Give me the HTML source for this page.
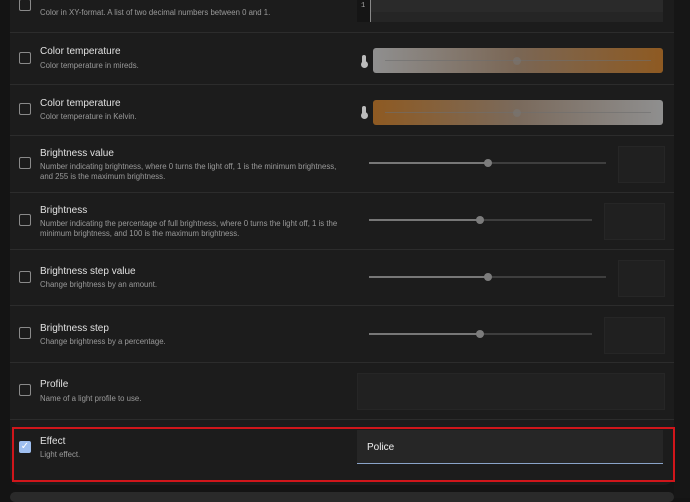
<!DOCTYPE html><html><head><style>
body{margin:0;width:690px;height:498px;background:#141414;overflow:hidden;font-family:"Liberation Sans",sans-serif;position:relative}
.card{position:absolute;left:10px;top:-10px;width:664px;height:495px;background:#1c1c1c;border-radius:0 0 10px 10px}
.right{position:absolute;left:674px;top:0;width:16px;height:498px;background:#161616}
.line{position:absolute;left:10px;width:664px;height:1px;background:#2c2c2c}
.cb{position:absolute;left:19px;width:10px;height:10px;border:1.5px solid #8a8a8a;border-radius:2px}
.t{position:absolute;left:40px;font-size:10px;color:#e1e1e1}
.d{position:absolute;left:40px;font-size:7.8px;color:#9a9a9a;line-height:10px;width:310px}
.sl{position:absolute;height:2px;background:#3e3e3e}
.slf{position:absolute;height:2px;background:#777}
.th{position:absolute;width:8px;height:8px;border-radius:50%;background:#7c7c7c}
.box{position:absolute;background:#202020;border:1px solid #262626}
.ct{position:absolute;left:373px;width:290px;height:25px;border-radius:3px}
.ct .ln{position:absolute;left:12px;top:12px;width:266px;height:1px;background:rgba(110,110,110,.6)}
.ct .tb{position:absolute;left:140px;top:9px;width:8px;height:8px;border-radius:50%;background:rgba(120,120,120,.5)}
.therm{position:absolute;left:362px;width:4px;height:10px;background:#bbb;border-radius:2px}
.therm:after{content:"";position:absolute;left:-1.5px;top:6px;width:7px;height:7px;border-radius:50%;background:#bbb}
</style></head><body>
<div class="card"></div><div class="right"></div>
<div style="position:absolute;left:357px;top:0;width:13px;height:22px;background:#151515"></div>
<div style="position:absolute;left:361px;top:2px;font-size:7px;color:#aaa;font-family:'Liberation Mono',monospace">1</div>
<div style="position:absolute;left:370px;top:0;width:1px;height:22px;background:#888"></div>
<div style="position:absolute;left:371px;top:0;width:292px;height:12px;background:#2a2a2a"></div>
<div style="position:absolute;left:371px;top:12px;width:292px;height:10px;background:#252525"></div>
<div class="cb" style="top:-1px"></div>
<div class="t" style="top:-8px">XY-Color</div>
<div class="d" style="top:8px">Color in XY-format. A list of two decimal numbers between 0 and 1.</div>
<div class="line" style="top:32px"></div>
<div class="cb" style="top:52px"></div>
<div class="t" style="top:46px">Color temperature</div>
<div class="d" style="top:61px">Color temperature in mireds.</div>
<div class="therm" style="top:55px"></div>
<div class="ct" style="top:48px;background:linear-gradient(90deg,#8f8f8f,#7a6654 50%,#8e5a22)"><div class="ln"></div><div class="tb"></div></div>
<div class="line" style="top:84px"></div>
<div class="cb" style="top:103px"></div>
<div class="t" style="top:98px">Color temperature</div>
<div class="d" style="top:112px">Color temperature in Kelvin.</div>
<div class="therm" style="top:106px"></div>
<div class="ct" style="top:100px;background:linear-gradient(90deg,#8e5a22,#7a6a5c 50%,#8f8f8f)"><div class="ln"></div><div class="tb"></div></div>
<div class="line" style="top:135px"></div>
<div class="cb" style="top:157px"></div>
<div class="t" style="top:148px">Brightness value</div>
<div class="d" style="top:162px">Number indicating brightness, where 0 turns the light off, 1 is the minimum brightness, and 255 is the maximum brightness.</div>
<div class="sl" style="left:369px;top:162px;width:237px"></div><div class="slf" style="left:369px;top:162px;width:119px"></div><div class="th" style="left:484px;top:159px"></div>
<div class="box" style="left:618px;top:146px;width:45px;height:35px"></div>
<div class="line" style="top:192px"></div>
<div class="cb" style="top:214px"></div>
<div class="t" style="top:205px">Brightness</div>
<div class="d" style="top:219px">Number indicating the percentage of full brightness, where 0 turns the light off, 1 is the minimum brightness, and 100 is the maximum brightness.</div>
<div class="sl" style="left:369px;top:219px;width:223px"></div><div class="slf" style="left:369px;top:219px;width:111px"></div><div class="th" style="left:476px;top:216px"></div>
<div class="box" style="left:604px;top:203px;width:59px;height:35px"></div>
<div class="line" style="top:249px"></div>
<div class="cb" style="top:271px"></div>
<div class="t" style="top:266px">Brightness step value</div>
<div class="d" style="top:280px">Change brightness by an amount.</div>
<div class="sl" style="left:369px;top:276px;width:237px"></div><div class="slf" style="left:369px;top:276px;width:119px"></div><div class="th" style="left:484px;top:273px"></div>
<div class="box" style="left:618px;top:260px;width:45px;height:35px"></div>
<div class="line" style="top:305px"></div>
<div class="cb" style="top:327px"></div>
<div class="t" style="top:323px">Brightness step</div>
<div class="d" style="top:337px">Change brightness by a percentage.</div>
<div class="sl" style="left:369px;top:333px;width:223px"></div><div class="slf" style="left:369px;top:333px;width:111px"></div><div class="th" style="left:476px;top:330px"></div>
<div class="box" style="left:604px;top:317px;width:59px;height:35px"></div>
<div class="line" style="top:362px"></div>
<div class="cb" style="top:384px"></div>
<div class="t" style="top:379px">Profile</div>
<div class="d" style="top:394px">Name of a light profile to use.</div>
<div class="box" style="left:357px;top:373px;width:306px;height:35px;background:#212121"></div>
<div class="line" style="top:419px"></div>
<div style="position:absolute;left:12px;top:427px;width:659px;height:51px;border:2px solid #d0161b"></div>
<div style="position:absolute;left:19px;top:441px;width:12px;height:12px;background:#9fbff0;border-radius:2px;color:#fff;font-size:10px;line-height:12px;text-align:center">✓</div>
<div class="t" style="top:436px">Effect</div>
<div class="d" style="top:450px">Light effect.</div>
<div style="position:absolute;left:357px;top:430px;width:306px;height:33px;background:#262626;border-bottom:1.5px solid #8aa3c8"></div>
<div style="position:absolute;left:367px;top:442px;font-size:10px;color:#eee">Police</div>
<div style="position:absolute;left:10px;top:492px;width:664px;height:10px;background:#2a2a2a;border-radius:6px"></div>
</body></html>
